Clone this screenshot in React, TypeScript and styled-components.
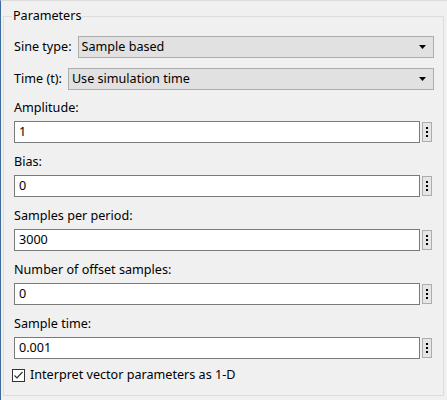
import styled, { createGlobalStyle } from "styled-components";

const GlobalStyle = createGlobalStyle`
  html, body {
    margin: 0;
    padding: 0;
    background: #f0f0f0;
  }
  body {
    font-family: "Noto Sans", "Open Sans", sans-serif;
    font-size: 12.6px;
    color: #000;
  }
`;

const Frame = styled.div`
  width: 447px;
  height: 400px;
  box-sizing: border-box;
  border-left: 1px solid #3c6a9a;
  border-top: 1px solid #dcdcdc;
  padding: 7px 3px 0 2px;
  background: #f0f0f0;
`;

const Group = styled.fieldset`
  margin: 0;
  border: 1px solid #dcdcdc;
  padding: 12px 9px 12px 10px;
  display: flex;
  flex-direction: column;
`;

const Legend = styled.legend`
  padding: 0 1px;
  margin-left: -2px;
  line-height: 16px;
`;

const ComboRow = styled.div<{ $gap?: number }>`
  display: flex;
  align-items: center;
  gap: 6px;
  height: 22px;
  margin-bottom: ${(p) => p.$gap ?? 0}px;
`;

const Label = styled.span`
  line-height: 16px;
  white-space: nowrap;
`;

const Combo = styled.div`
  flex: 1;
  height: 22px;
  box-sizing: border-box;
  border: 1px solid #adadad;
  background: #e1e1e1;
  display: flex;
  align-items: center;
  justify-content: space-between;
  padding: 0 7px 0 3px;
  line-height: 16px;
`;

const Arrow = () => (
  <svg width="7" height="4" viewBox="0 0 7 4">
    <path d="M0 0 H7 L3.5 4 Z" fill="#000" />
  </svg>
);

const Field = styled.div<{ $top?: number }>`
  display: flex;
  flex-direction: column;
  gap: 5px;
  margin-top: ${(p) => p.$top ?? 11}px;
`;

const InputRow = styled.div`
  display: flex;
  align-items: center;
  gap: 2px;
`;

const Input = styled.div`
  flex: 1;
  height: 22px;
  box-sizing: border-box;
  border: 1px solid #7a7a7a;
  background: #fff;
  padding: 0 4px;
  display: flex;
  align-items: center;
  line-height: 16px;
`;

const DotsButton = styled.div`
  width: 10px;
  height: 20px;
  box-sizing: border-box;
  border: 1px solid #adadad;
  background: #e5e5e5;
  margin-right: 2px;
  display: flex;
  flex-direction: column;
  align-items: center;
  justify-content: center;
  gap: 2px;
`;

const Dot = styled.span`
  width: 2px;
  height: 2px;
  background: #000;
`;

const CheckRow = styled.label`
  display: flex;
  align-items: center;
  gap: 5px;
  margin-top: 8px;
  margin-left: -2px;
  line-height: 16px;
`;

const Box = styled.span`
  width: 13px;
  height: 13px;
  box-sizing: border-box;
  border: 1px solid #333;
  background: #fff;
  display: flex;
  align-items: center;
  justify-content: center;
`;

const fields = [
  { label: "Amplitude:", value: "1" },
  { label: "Bias:", value: "0" },
  { label: "Samples per period:", value: "3000" },
  { label: "Number of offset samples:", value: "0" },
  { label: "Sample time:", value: "0.001" },
];

export default function App() {
  return (
    <Frame>
      <GlobalStyle />
      <Group>
        <Legend>Parameters</Legend>
        <ComboRow $gap={10}>
          <Label>Sine type:</Label>
          <Combo>
            Sample based
            <Arrow />
          </Combo>
        </ComboRow>
        <ComboRow>
          <Label>Time (t):</Label>
          <Combo>
            Use simulation time
            <Arrow />
          </Combo>
        </ComboRow>
        {fields.map((f, i) => (
          <Field key={f.label} $top={i === 0 ? 10 : 11}>
            <Label>{f.label}</Label>
            <InputRow>
              <Input>{f.value}</Input>
              <DotsButton>
                <Dot />
                <Dot />
                <Dot />
              </DotsButton>
            </InputRow>
          </Field>
        ))}
        <CheckRow>
          <Box>
            <svg width="11" height="11" viewBox="0 0 11 11">
              <path d="M1.5 5.5 L4 8 L9.5 2" fill="none" stroke="#333" strokeWidth="1.2" />
            </svg>
          </Box>
          Interpret vector parameters as 1-D
        </CheckRow>
      </Group>
    </Frame>
  );
}
